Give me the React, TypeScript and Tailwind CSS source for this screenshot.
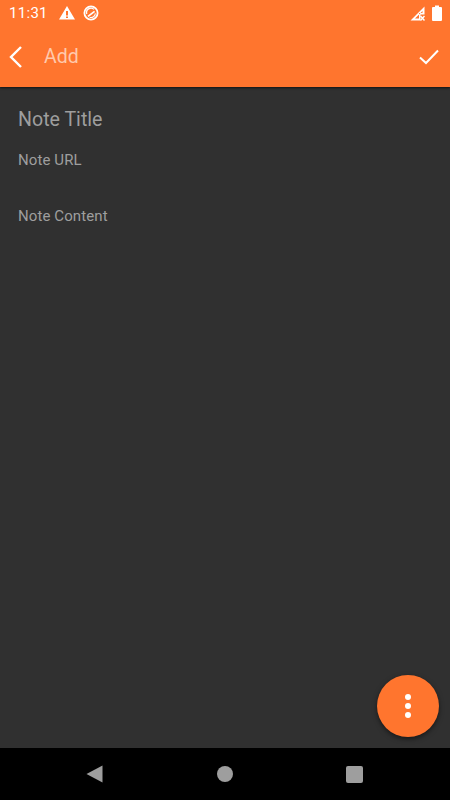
export default function App() {
  return (
    <div className="relative flex h-[800px] w-[450px] flex-col overflow-hidden bg-[#303030] font-['Roboto',sans-serif]">
      <header className="h-[87px] shrink-0 bg-[#ff752e] shadow-[0_1px_2px_rgba(0,0,0,0.6)]">
        <div className="flex h-[26px] items-center justify-between pl-[9px] pr-[8px] text-white">
          <div className="flex items-center">
            <span className="w-[40px] text-[15px] leading-[26px] tracking-[0.3px]">11:31</span>
            <svg className="ml-[10px]" width="16" height="16" viewBox="0 0 16 16">
              <path fillRule="evenodd" fill="#fff" d="M8 1 L16 14.5 H0 Z M7 6 V10.5 H9 V6 Z M7 11.5 V13 H9 V11.5 Z" />
            </svg>
            <svg className="ml-[8px]" width="16" height="16" viewBox="0 0 16 16" fill="none" stroke="#fff">
              <circle cx="8" cy="8" r="6.6" strokeWidth="1.8" />
              <path d="M3.8 9 A4.4 4.4 0 0 1 11 4.4" strokeWidth="1.3" />
              <path d="M5 11.4 L11.6 6.4" strokeWidth="1.8" />
              <path d="M6.6 12.2 A4.4 4.4 0 0 0 12.4 8.4" strokeWidth="1.1" />
            </svg>
          </div>
          <div className="flex items-center gap-[7px]">
            <svg width="15" height="15" viewBox="0 0 15 15">
              <path fillRule="evenodd" fill="#fff" d="M14.5 0.5 V8.5 H10.5 V14.5 H0.5 Z M12.5 5 L5 12.5 H9 V7 H12.5 Z" />
              <path stroke="#fff" strokeWidth="1.5" d="M10.5 10 L14.5 14.5 M14.5 10 L10.5 14.5" />
            </svg>
            <svg width="10" height="16" viewBox="0 0 10 16">
              <path fill="#fff" d="M3 0.5 H7 V2 H9 Q10 2 10 3 V15 Q10 16 9 16 H1 Q0 16 0 15 V3 Q0 2 1 2 H3 Z" />
            </svg>
          </div>
        </div>
        <div className="flex h-[61px] items-center justify-between pl-[8px] pr-[11px] pt-[1px]">
          <div className="flex items-center">
            <svg width="15" height="24" viewBox="0 0 15 24" fill="none" stroke="#fff" strokeWidth="2.4">
              <path d="M13 2 L3 12 L13 22" />
            </svg>
            <span className="ml-[21px] text-[19.5px] leading-[28px] text-[#ffc9ab]">Add</span>
          </div>
          <svg width="20" height="16" viewBox="0 0 20 16" fill="none" stroke="#fff" strokeWidth="2">
            <path d="M1 8.5 L7 14 L19 1.5" />
          </svg>
        </div>
      </header>
      <main className="flex-1 pl-[18px] text-[#9e9e9e]">
        <div className="mt-[19px] text-[19.6px] leading-[28px]">Note Title</div>
        <div className="mt-[16px] text-[15px] leading-[20px] tracking-[0.1px]">Note URL</div>
        <div className="mt-[36px] text-[15px] leading-[20px] tracking-[0.1px]">Note Content</div>
      </main>
      <button className="absolute bottom-[63px] right-[11px] flex h-[62px] w-[62px] flex-col items-center justify-center gap-[3px] rounded-full bg-[#ff752e] pb-[1px] shadow-[0_2px_5px_rgba(0,0,0,0.5)]">
        <span className="h-[6px] w-[6px] rounded-full bg-white" />
        <span className="h-[6px] w-[6px] rounded-full bg-white" />
        <span className="h-[6px] w-[6px] rounded-full bg-white" />
      </button>
      <nav className="flex h-[52px] shrink-0 items-center bg-black pl-[86px]">
        <svg width="17" height="18" viewBox="0 0 17 18">
          <path fill="#9e9e9e" d="M16.5 0.5 V17.5 L0.5 9 Z" />
        </svg>
        <span className="ml-[114px] h-[16px] w-[16px] rounded-full bg-[#9e9e9e]" />
        <span className="ml-[113px] h-[17px] w-[17px] rounded-[2px] bg-[#9e9e9e]" />
      </nav>
    </div>
  );
}
